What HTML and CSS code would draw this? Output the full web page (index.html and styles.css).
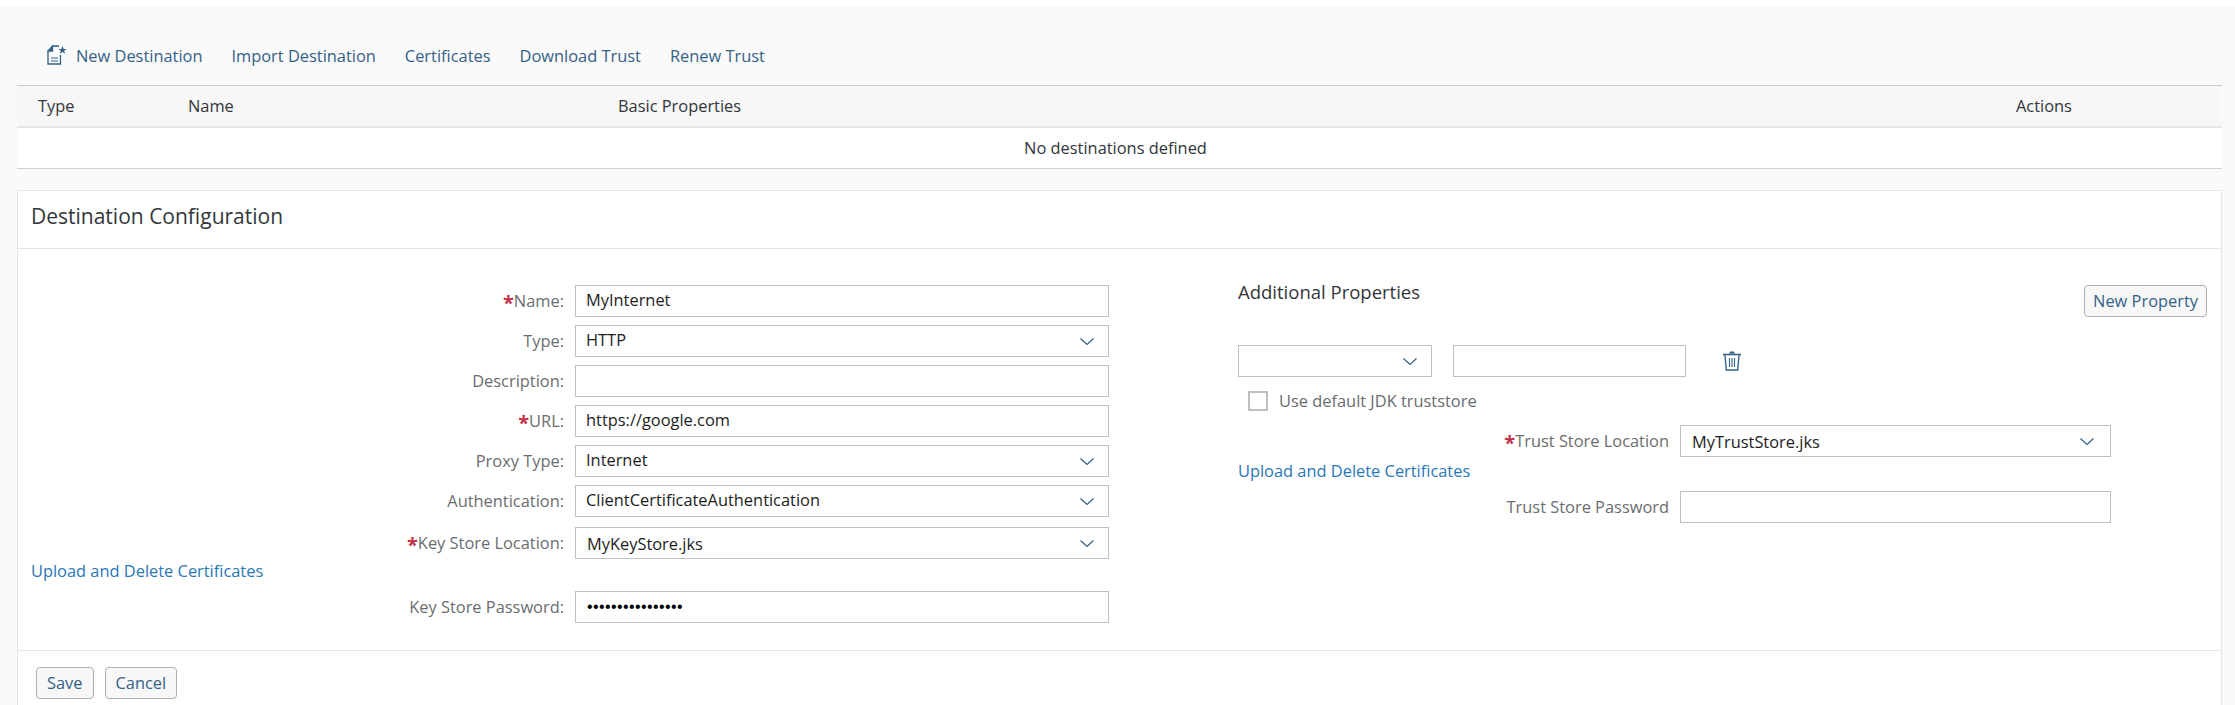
FILE: index.html
```html
<!DOCTYPE html>
<html lang="en">
<head>
<meta charset="utf-8">
<title>Destinations</title>
<link rel="stylesheet" href="styles.css">
</head>
<body>
<div class="page">
  <nav class="toolbar">
    <a class="tool">
      <svg class="tool-icon" width="20" height="20" viewBox="0 0 20 20" fill="none" stroke="#346187" stroke-width="1.3"><path d="M5.5 1h6.5M1 6v13h12.5V10"/><path d="M1 6 5.5 1v5z" fill="#346187"/><path d="M4 13h7M4 16h7" stroke-width="1.1"/><path d="M15.5 1l1.1 2.9 3 .1-2.4 1.8.9 2.9-2.6-1.7-2.6 1.7.9-2.9L11.4 4l3-.1z" fill="#346187" stroke="none"/></svg>
      New Destination</a>
    <a class="tool">Import Destination</a>
    <a class="tool">Certificates</a>
    <a class="tool">Download Trust</a>
    <a class="tool">Renew Trust</a>
  </nav>
  <div class="table">
    <div class="thead">
      <span>Type</span>
      <span>Name</span>
      <span>Basic Properties</span>
      <span>Actions</span>
    </div>
    <div class="empty">No destinations defined</div>
  </div>
  <section class="panel">
    <h2 class="panel-title">Destination Configuration</h2>
    <div class="panel-body">
      <div class="form-left">
        <div class="row"><label class="lbl"><b>*</b>Name:</label><div class="field">MyInternet</div></div>
        <div class="row"><label class="lbl">Type:</label><div class="field select">HTTP<svg class="chev" viewBox="0 0 14 7"><path d="M.5.5 7 6.500 13.500.5"/></svg></div></div>
        <div class="row"><label class="lbl">Description:</label><div class="field"></div></div>
        <div class="row"><label class="lbl"><b>*</b>URL:</label><div class="field">https://google.com</div></div>
        <div class="row"><label class="lbl">Proxy Type:</label><div class="field select">Internet<svg class="chev" viewBox="0 0 14 7"><path d="M.5.5 7 6.500 13.500.5"/></svg></div></div>
        <div class="row"><label class="lbl">Authentication:</label><div class="field select">ClientCertificateAuthentication<svg class="chev" viewBox="0 0 14 7"><path d="M.5.5 7 6.500 13.500.5"/></svg></div></div>
        <div class="row row-key"><label class="lbl"><b>*</b>Key Store Location:</label><div class="field select field-low">MyKeyStore.jks<svg class="chev" viewBox="0 0 14 7"><path d="M.5.5 7 6.500 13.500.5"/></svg></div></div>
        <a class="upload upload-left">Upload and Delete Certificates</a>
        <div class="row"><label class="lbl">Key Store Password:</label><div class="field dots">••••••••••••••••</div></div>
      </div>
      <div class="form-right">
        <div class="right-head">
          <h3 class="sub-title">Additional Properties</h3>
          <button class="btn btn-prop">New Property</button>
        </div>
        <div class="prop-row">
          <div class="field select prop-key"><svg class="chev" viewBox="0 0 14 7"><path d="M.5.5 7 6.500 13.500.5"/></svg></div>
          <div class="field prop-val"></div>
          <svg class="trash" width="18" height="20" viewBox="0 0 18 20" fill="none" stroke="#346187"><path d="M6 2.500 7 .5h4l1 2z" fill="#346187" stroke="none"/><path d="M0 3.500h18" stroke-width="1.6"/><path d="M2 4l1.300 15h11.400L16 4" stroke-width="1.4"/><path d="M6.500 7v9M9 7v9M11.500 7v9" stroke-width="1.1"/></svg>
        </div>
        <label class="check"><span class="box"></span>Use default JDK truststore</label>
        <div class="trust">
          <a class="upload upload-right">Upload and Delete Certificates</a>
          <div class="trust-fields">
            <div class="row"><label class="lbl lbl-trust"><b>*</b>Trust Store Location</label><div class="field select field-low trust-field">MyTrustStore.jks<svg class="chev chev-trust" viewBox="0 0 14 7"><path d="M.5.5 7 6.500 13.500.5"/></svg></div></div>
            <div class="row"><label class="lbl lbl-trust">Trust Store Password</label><div class="field trust-field"></div></div>
          </div>
        </div>
      </div>
    </div>
    <footer class="panel-foot">
      <button class="btn">Save</button>
      <button class="btn">Cancel</button>
    </footer>
  </section>
</div>
</body>
</html>
```
FILE: styles.css
```css
* { box-sizing: border-box; }
html, body { margin: 0; padding: 0; height: 100%; }
body { background: #fff; font-family: "Open Sans", "Liberation Sans", Arial, sans-serif; font-size: 16.4px; color: #32363a; }
.page { background: #fafafa; margin-top: 6px; padding: 0 13px 0 17px; height: 699px; overflow: hidden; }
.toolbar { height: 79px; display: flex; align-items: center; padding: 19px 0 0 30px; gap: 29px; color: #346187; }
.tool { display: flex; align-items: center; }
.tool-icon { margin-right: 9px; }
.table { background: #fff; }
.thead { height: 43px; background: #f7f7f7; border-top: 1px solid #c9c9c9; border-bottom: 2px solid #e5e5e5; display: grid; grid-template-columns: 150px 430px 1398px 1fr; align-items: center; padding: 0 0 2px 21px; }
.empty { height: 41px; border-bottom: 1px solid #d0d0d0; text-align: center; line-height: 40px; padding-right: 8px; }
.panel { margin-top: 21px; background: #fff; border: 1px solid #e5e5e5; border-bottom: 0; }
.panel-title { margin: 0; height: 58px; padding: 0 13px; font-size: 21px; font-weight: 400; line-height: 51px; border-bottom: 1px solid #e5e5e5; }
.panel-body { display: flex; height: 401px; }
.form-left { width: 1220px; padding-top: 36px; }
.row { display: flex; align-items: center; margin-bottom: 8px; }
.lbl { width: 546px; margin-right: 11px; padding-bottom: 2px; text-align: right; color: #6a6d70; }
.lbl b { color: #c0324a; font-weight: 700; font-size: 20px; line-height: 0; vertical-align: -3px; }
.field { width: 534px; height: 32px; background: #fff; border: 1px solid #bfbfbf; padding: 0 10px; line-height: 27px; color: #1d1d1d; position: relative; flex: none; }
.field-low { line-height: 32px; padding-left: 11px; }
.chev { position: absolute; right: 14px; top: 12px; width: 14px; height: 7px; fill: none; stroke: #346187; stroke-width: 1.2; }
.chev-trust { right: 16px; }
.upload { color: #2a78b6; display: block; line-height: 24px; }
.row-key { margin-top: 10px; margin-bottom: 0; }
.upload-left { padding-left: 13px; margin-bottom: 8px; }
.dots { font-family: "Liberation Sans", Arial, sans-serif; font-size: 16px; line-height: 29px; letter-spacing: 0.4px; color: #000; padding-left: 11px; }
.form-right { flex: 1; padding-right: 14px; }
.right-head { display: flex; justify-content: space-between; align-items: flex-start; padding-top: 31px; }
.sub-title { margin: 0; font-size: 18.5px; font-weight: 400; line-height: 24px; }
.btn { height: 32px; background: #f7f7f7; border: 1px solid #b0b0b0; border-radius: 4px; color: #346187; font: inherit; padding: 0 10px 2px; }
.btn-prop { margin-top: 5px; padding: 0 8px 2px; }
.prop-row { display: flex; align-items: center; margin-top: 28px; }
.prop-key { width: 194px; }
.prop-val { width: 233px; margin-left: 21px; }
.trash { margin-left: 37px; }
.check { display: flex; align-items: center; margin: 12px 0 0 10px; color: #6a6d70; }
.box { width: 20px; height: 20px; border: 2px solid #bfbfbf; background: #fff; margin-right: 11px; }
.trust { display: flex; margin-top: 13px; }
.upload-right { width: 262px; margin-top: 34px; flex: none; }
.trust-fields .row { margin-bottom: 34px; }
.lbl-trust { width: 169px; margin-right: 11px; white-space: nowrap; }
.trust-field { width: 431px; }
.panel-foot { height: 60px; border-top: 1px solid #e5e5e5; padding: 16px 0 0 18px; display: flex; gap: 11px; }
```
